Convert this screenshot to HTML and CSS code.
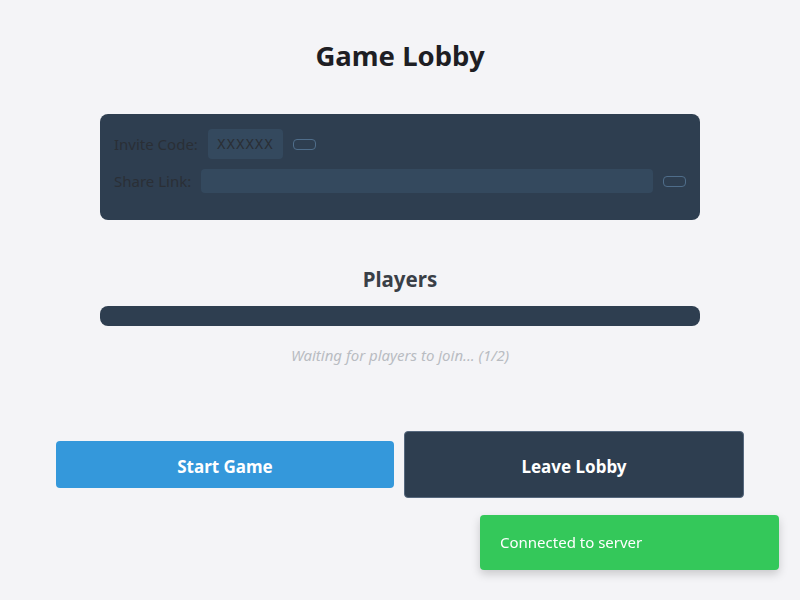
FILE: index.html
```html
<!DOCTYPE html>
<html>
<head>
<meta charset="utf-8">
<link rel="stylesheet" href="styles.css">
</head>
<body>
<main class="lobby">
  <h1 class="title">Game Lobby</h1>
  <section class="invite">
    <div class="invite-row">
      <span class="label">Invite Code:</span>
      <span class="code">XXXXXX</span>
      <button class="copy"></button>
    </div>
    <div class="invite-row">
      <span class="label">Share Link:</span>
      <input class="link" type="text" value="">
      <button class="copy"></button>
    </div>
  </section>
  <h2 class="players-title">Players</h2>
  <div class="players-list"></div>
  <p class="waiting">Waiting for players to join... (1/2)</p>
  <div class="actions">
    <button class="btn btn-start">Start Game</button>
    <button class="btn btn-leave">Leave Lobby</button>
  </div>
</main>
<div class="toast">Connected to server</div>
</body>
</html>
```
FILE: styles.css
```css
* { box-sizing: border-box; }
html, body { margin: 0; padding: 0; }
body {
  background: #f4f4f7;
  font-family: "Noto Sans", "Open Sans", sans-serif;
  color: #222;
  height: 600px;
  overflow: hidden;
}
.lobby {
  display: flex;
  flex-direction: column;
  align-items: center;
  padding-top: 36px;
}
.title {
  margin: 0;
  font-size: 27.5px;
  font-weight: 700;
  color: #1e1e24;
  line-height: 40px;
}
.invite {
  margin-top: 38px;
  width: 600px;
  height: 106px;
  background: #2e3e50;
  border-radius: 8px;
  padding: 15px 14px;
  display: flex;
  flex-direction: column;
  gap: 10px;
}
.invite-row {
  display: flex;
  align-items: center;
  gap: 10px;
}
.label {
  font-size: 15px;
  color: #2a2f36;
}
.code {
  background: #34495e;
  border-radius: 4px;
  height: 30px;
  width: 75px;
  display: flex;
  align-items: center;
  justify-content: center;
  font-family: "DejaVu Sans Mono", monospace;
  font-size: 14px;
  letter-spacing: 1px;
  color: #2a2f36;
}
.copy {
  width: 23px;
  height: 11px;
  padding: 0;
  background: transparent;
  border: 1px solid #4f6d8a;
  border-radius: 4px;
}
.link {
  flex: 1;
  height: 24px;
  background: #34495e;
  border: none;
  border-radius: 4px;
}
.players-title {
  margin: 44px 0 0;
  font-size: 20.5px;
  font-weight: 700;
  color: #3a3f47;
  line-height: 30px;
}
.players-list {
  margin-top: 12px;
  width: 600px;
  height: 20px;
  background: #2e3e50;
  border-radius: 8px;
}
.waiting {
  margin: 19px 0 0;
  font-size: 15px;
  font-style: italic;
  color: #b9bcc2;
  line-height: 20px;
}
.actions {
  margin-top: 66px;
  width: 688px;
  display: flex;
  align-items: center;
  gap: 10px;
}
.btn {
  font-family: "Noto Sans", "Open Sans", sans-serif;
  font-size: 17px;
  font-weight: 700;
  color: #fff;
  border-radius: 4px;
  cursor: pointer;
  padding: 3px 0 0;
}
.btn-start {
  width: 338px;
  height: 47px;
  background: #3498db;
  border: none;
}
.btn-leave {
  width: 340px;
  height: 67px;
  background: #2e3e50;
  border: 1px solid #56687e;
}
.toast {
  position: fixed;
  right: 21px;
  bottom: 30px;
  width: 299px;
  height: 55px;
  background: #34c85a;
  color: #fff;
  border-radius: 4px;
  font-size: 15px;
  display: flex;
  align-items: center;
  padding-left: 20px;
  padding-bottom: 2px;
  box-shadow: 0 4px 10px rgba(0,0,0,0.18);
}
```
